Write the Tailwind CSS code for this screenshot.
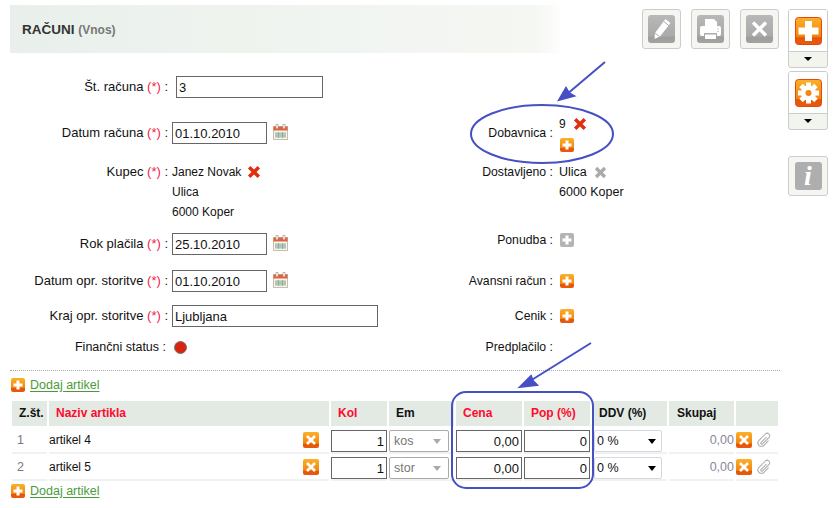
<!DOCTYPE html>
<html lang="sl">
<head>
  <meta charset="UTF-8" />
  <title>Računi</title>
  <script src="https://cdn.jsdelivr.net/npm/@tailwindcss/browser@4"></script>
</head>
<body class="bg-white font-['Liberation_Sans',Arial,sans-serif] text-[12px] text-[#111]">
  <!-- shared icons -->
  <svg class="absolute w-0 h-0">
    <defs>
      <linearGradient id="org" x1="0" y1="0" x2="0" y2="1">
        <stop offset="0" stop-color="#fbb028" /><stop offset="0.7" stop-color="#f3860f" /><stop offset="0.75" stop-color="#e3560a" /><stop offset="1" stop-color="#e9590c" />
      </linearGradient>
      <linearGradient id="gry" x1="0" y1="0" x2="0" y2="1">
        <stop offset="0" stop-color="#b8b8b8" /><stop offset="0.75" stop-color="#aaaaaa" /><stop offset="0.8" stop-color="#9e9e9e" /><stop offset="1" stop-color="#a2a2a2" />
      </linearGradient>
      <symbol id="add" viewBox="0 0 14 14">
        <rect width="14" height="14" rx="2" fill="url(#org)" />
        <path d="M5.500 2.500h3v3h3v3h-3v3h-3v-3h-3v-3h3z" fill="#fff" />
      </symbol>
      <symbol id="addg" viewBox="0 0 14 14">
        <rect width="14" height="14" rx="2" fill="#b4b4b4" />
        <path d="M5.500 2.500h3v3h3v3h-3v3h-3v-3h-3v-3h3z" fill="#fff" />
      </symbol>
      <symbol id="del" viewBox="0 0 16 16">
        <rect width="16" height="16" rx="2" fill="url(#org)" />
        <path d="M4 4l8 8M12 4l-8 8" stroke="#fff" stroke-width="2.600" />
      </symbol>
      <symbol id="cross" viewBox="0 0 14 14">
        <path d="M2.200 2.200l9.600 9.600M11.800 2.200l-9.600 9.600" stroke="currentColor" stroke-width="3.600" />
      </symbol>
      <symbol id="cal" viewBox="0 0 15 16">
        <rect x="0.500" y="2.500" width="14" height="13" fill="#f2f6f2" stroke="#cdbcae" />
        <rect x="0.500" y="2.500" width="14" height="4" fill="#e4623e" />
        <rect x="3" y="0.500" width="2" height="4" fill="#fff" stroke="#998" stroke-width="0.600" />
        <rect x="10" y="0.500" width="2" height="4" fill="#fff" stroke="#998" stroke-width="0.600" />
        <path d="M2 8h11v6H2z" fill="#c6dfbd" />
        <path d="M2 10h11M2 12h11M5.500 8v6M9.500 8v6" stroke="#8b9ba6" stroke-width="0.700" />
      </symbol>
      <symbol id="clip" viewBox="0 0 16 16">
        <path transform="rotate(45 8 8)" d="M7 5v7.500a1 1 0 0 0 2 0V3.500a2.500 2.500 0 0 0-5 0v9a3.500 3.500 0 0 0 7 0V6" fill="none" stroke="#aaa" />
      </symbol>
    </defs>
  </svg>

  <div class="relative w-[837px] h-[508px] overflow-hidden flex">
    <!-- main column -->
    <div class="w-[780px] shrink-0 pl-[10px] pt-[5px]">
      <div class="h-[48px] flex justify-between pt-1 bg-[linear-gradient(90deg,#e9f0eb_0%,#f5f7f3_68%,#fff_72%)]">
        <div class="pl-3 h-10 leading-[42px] font-bold text-[13.500px] text-[#333] whitespace-nowrap">RAČUNI <span class="text-[12px] text-[#777]">(Vnos)</span></div>
        <div class="flex gap-[10px] pr-px">
          <div class="w-[39px] h-10 border border-[#ccc] rounded-[3px] bg-[#f5f6f2] flex items-center justify-center">
            <svg class="w-[27px] h-[28px]" viewBox="0 0 27 28"><rect width="27" height="28" rx="3" fill="url(#gry)" /><path d="M17.500 4l5 4-10.500 13.500-5.500 2.500.5-6z" fill="#fff" /><path d="M7.200 18.200l4.300 3.300M15.800 6.500l5 4" stroke="#aaa" /></svg>
          </div>
          <div class="w-[39px] h-10 border border-[#ccc] rounded-[3px] bg-[#f5f6f2] flex items-center justify-center">
            <svg class="w-[27px] h-[28px]" viewBox="0 0 27 28"><rect width="27" height="28" rx="3" fill="url(#gry)" /><path d="M8 4h9l3 3v4H8z" fill="#fff" /><path d="M3 13a2 2 0 0 1 2-2h17a2 2 0 0 1 2 2v6a2 2 0 0 1-2 2h-2v-3H7v3H5a2 2 0 0 1-2-2z" fill="#fff" /><path d="M8 19.500h11v4.500H8z" fill="#fff" /><path d="M21 13.500v1M21 16v1" stroke="#999" /></svg>
          </div>
          <div class="w-[39px] h-10 border border-[#ccc] rounded-[3px] bg-[#f5f6f2] flex items-center justify-center">
            <svg class="w-[27px] h-[28px]" viewBox="0 0 27 28"><rect width="27" height="28" rx="3" fill="url(#gry)" /><path d="M7 7.500l13 13M20 7.500l-13 13" stroke="#fff" stroke-width="3.400" /></svg>
          </div>
        </div>
      </div>

      <!-- form -->
      <div class="flex h-[317px]">
        <div class="w-[390px] shrink-0 flex flex-col">
          <div class="mt-[23px] h-[22px] flex items-center">
            <div class="w-[158px] text-[13px] text-right whitespace-nowrap">Št. računa <span class="text-[#f0264a]">(*)</span> :</div>
            <input value="3" class="ml-2 w-[147px] h-[22px] border border-[#666] px-[2px] text-[13px]" />
          </div>
          <div class="mt-[24px] h-[22px] flex items-center">
            <div class="w-[158px] text-[13px] text-right whitespace-nowrap">Datum računa <span class="text-[#f0264a]">(*)</span> :</div>
            <input value="01.10.2010" class="ml-1 w-[95px] h-[22px] border border-[#666] px-[2px] text-[13px]" />
            <svg class="ml-[6px] w-[15px] h-4 -mt-[3px]"><use href="#cal" /></svg>
          </div>
          <div class="mt-[18px] flex">
            <div class="w-[158px] h-5 leading-5 text-[13px] text-right whitespace-nowrap">Kupec <span class="text-[#f0264a]">(*)</span> :</div>
            <div class="ml-1 leading-5">
              <div class="flex items-center h-5">Janez Novak<svg class="ml-[6px] w-[14px] h-[14px] text-[#e0300f]"><use href="#cross" /></svg></div>
              <div>Ulica</div>
              <div>6000 Koper</div>
            </div>
          </div>
          <div class="mt-[11px] h-[22px] flex items-center">
            <div class="w-[158px] text-[13px] text-right whitespace-nowrap">Rok plačila <span class="text-[#f0264a]">(*)</span> :</div>
            <input value="25.10.2010" class="ml-1 w-[95px] h-[22px] border border-[#666] px-[2px] text-[13px]" />
            <svg class="ml-[6px] w-[15px] h-4 -mt-[3px]"><use href="#cal" /></svg>
          </div>
          <div class="mt-[15px] h-[22px] flex items-center">
            <div class="w-[158px] text-[13px] text-right whitespace-nowrap">Datum opr. storitve <span class="text-[#f0264a]">(*)</span> :</div>
            <input value="01.10.2010" class="ml-1 w-[95px] h-[22px] border border-[#666] px-[2px] text-[13px]" />
            <svg class="ml-[6px] w-[15px] h-4 -mt-[3px]"><use href="#cal" /></svg>
          </div>
          <div class="mt-[13px] h-[22px] flex items-center">
            <div class="w-[158px] text-[13px] text-right whitespace-nowrap">Kraj opr. storitve <span class="text-[#f0264a]">(*)</span> :</div>
            <input value="Ljubljana" class="ml-1 w-[206px] h-[22px] border border-[#666] px-[2px] text-[13px]" />
          </div>
          <div class="mt-[10px] h-5 flex items-center">
            <div class="w-[156px] text-[12.500px] text-right whitespace-nowrap">Finančni status :</div>
            <div class="ml-2 w-[13px] h-[13px] rounded-full bg-[#d9230f] border border-[#777]"></div>
          </div>
        </div>

        <div class="flex flex-col text-[12.250px]">
          <div class="mt-[60px] h-10 flex items-center">
            <div class="w-[153px] text-right whitespace-nowrap">Dobavnica :</div>
            <div class="ml-[6px] text-[12px]">
              <div class="flex items-center h-5">9<svg class="ml-[7px] w-[14px] h-[14px] text-[#e0300f]"><use href="#cross" /></svg></div>
              <svg class="mt-[4px] ml-px w-[14px] h-[14px]"><use href="#add" /></svg>
            </div>
          </div>
          <div class="mt-[9px] flex">
            <div class="w-[153px] h-5 leading-5 text-right whitespace-nowrap">Dostavljeno :</div>
            <div class="ml-[6px] leading-5 text-[12.500px]">
              <div class="flex items-center h-5">Ulica<svg class="ml-[7px] w-[13px] h-[13px] text-[#aaa]"><use href="#cross" /></svg></div>
              <div>6000 Koper</div>
            </div>
          </div>
          <div class="mt-[28px] h-5 flex items-center">
            <div class="w-[153px] text-right whitespace-nowrap">Ponudba :</div>
            <svg class="ml-[7px] w-[14px] h-[14px]"><use href="#addg" /></svg>
          </div>
          <div class="mt-[21px] h-5 flex items-center">
            <div class="w-[153px] text-right whitespace-nowrap">Avansni račun :</div>
            <svg class="ml-[7px] w-[14px] h-[14px]"><use href="#add" /></svg>
          </div>
          <div class="mt-[15px] h-5 flex items-center">
            <div class="w-[153px] text-right whitespace-nowrap">Cenik :</div>
            <svg class="ml-[7px] w-[14px] h-[14px]"><use href="#add" /></svg>
          </div>
          <div class="mt-[11px] h-5 flex items-center">
            <div class="w-[153px] text-right whitespace-nowrap">Predplačilo :</div>
          </div>
        </div>
      </div>

      <div class="border-t border-dotted border-[#aaa]"></div>

      <a class="mt-[7px] h-[14px] flex items-center text-[12.500px] text-[#4a9a3c]">
        <svg class="ml-px w-[14px] h-[14px]"><use href="#add" /></svg>
        <span class="ml-[5px] underline underline-offset-2">Dodaj artikel</span>
      </a>

      <!-- items -->
      <div class="ml-[2px] mt-[9px] grid grid-cols-[35px_280px_56px_65px_66px_66px_75px_65px_42px] gap-x-[2px] w-[768px] text-[12.500px]">
        <div class="h-[25px] leading-[25px] bg-[#e3e9e3] font-bold text-[12px] pl-[7px]">Z.št.</div>
        <div class="h-[25px] leading-[25px] bg-[#e3e9e3] font-bold text-[12px] pl-[7px] text-[#ff0a2e]">Naziv artikla</div>
        <div class="h-[25px] leading-[25px] bg-[#e3e9e3] font-bold text-[12px] pl-[7px] text-[#ff0a2e]">Kol</div>
        <div class="h-[25px] leading-[25px] bg-[#e3e9e3] font-bold text-[12px] pl-[7px]">Em</div>
        <div class="h-[25px] leading-[25px] bg-[#e3e9e3] font-bold text-[12px] pl-[7px] text-[#ff0a2e]">Cena</div>
        <div class="h-[25px] leading-[25px] bg-[#e3e9e3] font-bold text-[12px] pl-[7px] text-[#ff0a2e]">Pop (%)</div>
        <div class="h-[25px] leading-[25px] bg-[#e3e9e3] font-bold text-[12px] pl-[7px]">DDV (%)</div>
        <div class="h-[25px] leading-[25px] bg-[#e3e9e3] font-bold text-[12px] pl-[8px]">Skupaj</div>
        <div class="h-[25px] bg-[#e3e9e3]"></div>

        <!-- row 1 -->
        <div class="h-[27px] mt-px border-b-2 border-[#f0f2f0] pl-[5px] leading-[27px] text-[#778]">1</div>
        <div class="h-[27px] mt-px border-b-2 border-[#f0f2f0] flex items-center justify-between text-[12px] pr-[10px]">artikel 4<svg class="w-4 h-4"><use href="#del" /></svg></div>
        <div class="h-[27px] mt-px border-b-2 border-[#f0f2f0]"><input value="1" class="mt-[3px] w-full h-[22px] border border-[#666] px-[2px] text-right text-[13px]" /></div>
        <div class="h-[27px] mt-px border-b-2 border-[#f0f2f0]"><div class="mt-[3px] relative w-[60px] h-[22px] border border-[#aaa] rounded-[2px] pl-[4px] leading-5 text-[#777]">kos<span class="absolute right-[7px] top-[8px] w-0 h-0 border-x-4 border-t-[5px] border-x-transparent border-t-[#aaa]"></span></div></div>
        <div class="h-[27px] mt-px border-b-2 border-[#f0f2f0]"><input value="0,00" class="mt-[3px] w-full h-[22px] border border-[#666] px-[2px] text-right text-[13px]" /></div>
        <div class="h-[27px] mt-px border-b-2 border-[#f0f2f0]"><input value="0" class="mt-[3px] w-full h-[22px] border border-[#666] px-[2px] text-right text-[13px]" /></div>
        <div class="h-[27px] mt-px border-b-2 border-[#f0f2f0]"><div class="mt-[3px] relative ml-[2px] w-[68px] h-[22px] border border-[#d5d8e0] rounded-[2px] pl-[2px] leading-5">0 %<span class="absolute right-[5px] top-[8px] w-0 h-0 border-x-4 border-t-[5px] border-x-transparent border-t-black"></span></div></div>
        <div class="h-[27px] mt-px border-b-2 border-[#f0f2f0] text-right leading-[27px] text-[#889]">0,00</div>
        <div class="h-[27px] mt-px border-b-2 border-[#f0f2f0] flex items-center"><svg class="w-4 h-4"><use href="#del" /></svg><svg class="ml-[5px] w-4 h-4"><use href="#clip" /></svg></div>

        <!-- row 2 -->
        <div class="h-[27px] border-b-2 border-[#f0f2f0] pl-[5px] leading-[27px] text-[#778]">2</div>
        <div class="h-[27px] border-b-2 border-[#f0f2f0] flex items-center justify-between text-[12px] pr-[10px]">artikel 5<svg class="w-4 h-4"><use href="#del" /></svg></div>
        <div class="h-[27px] border-b-2 border-[#f0f2f0]"><input value="1" class="mt-[3px] w-full h-[22px] border border-[#666] px-[2px] text-right text-[13px]" /></div>
        <div class="h-[27px] border-b-2 border-[#f0f2f0]"><div class="mt-[3px] relative w-[60px] h-[22px] border border-[#aaa] rounded-[2px] pl-[4px] leading-5 text-[#777]">stor<span class="absolute right-[7px] top-[8px] w-0 h-0 border-x-4 border-t-[5px] border-x-transparent border-t-[#aaa]"></span></div></div>
        <div class="h-[27px] border-b-2 border-[#f0f2f0]"><input value="0,00" class="mt-[3px] w-full h-[22px] border border-[#666] px-[2px] text-right text-[13px]" /></div>
        <div class="h-[27px] border-b-2 border-[#f0f2f0]"><input value="0" class="mt-[3px] w-full h-[22px] border border-[#666] px-[2px] text-right text-[13px]" /></div>
        <div class="h-[27px] border-b-2 border-[#f0f2f0]"><div class="mt-[3px] relative ml-[2px] w-[68px] h-[22px] border border-[#d5d8e0] rounded-[2px] pl-[2px] leading-5">0 %<span class="absolute right-[5px] top-[8px] w-0 h-0 border-x-4 border-t-[5px] border-x-transparent border-t-black"></span></div></div>
        <div class="h-[27px] border-b-2 border-[#f0f2f0] text-right leading-[27px] text-[#889]">0,00</div>
        <div class="h-[27px] border-b-2 border-[#f0f2f0] flex items-center"><svg class="w-4 h-4"><use href="#del" /></svg><svg class="ml-[5px] w-4 h-4"><use href="#clip" /></svg></div>
      </div>

      <a class="mt-[3px] h-[14px] flex items-center text-[12.500px] text-[#4a9a3c]">
        <svg class="ml-px w-[14px] h-[14px]"><use href="#add" /></svg>
        <span class="ml-[5px] underline underline-offset-2">Dodaj artikel</span>
      </a>
    </div>

    <!-- side buttons -->
    <div class="ml-2 pt-[9px] flex flex-col w-[40px]">
      <div class="h-[59px] border border-[#ccc] rounded-[3px] bg-[#f2f4ee] overflow-hidden">
        <div class="h-[35px] bg-white flex items-end justify-center border-b border-[#ccc] pb-[6px] box-content">
          <svg class="w-[27px] h-[28px]" viewBox="0 0 27 28"><rect x="0.500" y="0.500" width="26" height="27" rx="3" fill="url(#org)" stroke="#e04a10" /><path d="M10 4h7v6.500h6.500v7H17V24h-7v-6.500H3.500v-7H10z" fill="#fff" /></svg>
        </div>
        <div class="flex justify-center pt-[5px]"><span class="w-0 h-0 border-x-[4px] border-t-[4px] border-x-transparent border-t-black"></span></div>
      </div>
      <div class="mt-[3px] h-[59px] border border-[#ccc] rounded-[3px] bg-[#f2f4ee] overflow-hidden">
        <div class="h-[35px] bg-white flex items-end justify-center border-b border-[#ccc] pb-[6px] box-content">
          <svg class="w-[27px] h-[28px]" viewBox="0 0 27 28"><rect x="0.500" y="0.500" width="26" height="27" rx="3" fill="url(#org)" stroke="#e04a10" /><g fill="#fff"><circle cx="13.500" cy="14" r="7.500" /><rect x="11" y="3.500" width="5" height="21" /><rect x="3" y="11.500" width="21" height="5" /><rect x="11" y="3.500" width="5" height="21" transform="rotate(45 13.500 14)" /><rect x="11" y="3.500" width="5" height="21" transform="rotate(-45 13.500 14)" /></g><circle cx="13.500" cy="14" r="3" fill="#f3860f" /></svg>
        </div>
        <div class="flex justify-center pt-[5px]"><span class="w-0 h-0 border-x-[4px] border-t-[4px] border-x-transparent border-t-black"></span></div>
      </div>
      <div class="mt-[26px] w-[40px] h-10 border border-[#ccc] rounded-[3px] bg-[#f5f6f2] flex items-center justify-center">
        <div class="w-[27px] h-[28px] rounded-[3px] bg-[#aeaeae] text-white text-center font-bold italic text-[28px] leading-[28px] font-['Liberation_Serif',serif]">i</div>
      </div>
    </div>

    <!-- blue annotations drawn over the screenshot -->
    <svg class="absolute left-0 top-0 w-[837px] h-[508px] pointer-events-none" viewBox="0 0 837 508" fill="none" stroke="#4450c4" stroke-width="2">
      <ellipse cx="542" cy="134" rx="71" ry="29" />
      <path d="M605 62L566 95" />
      <path d="M559 100L566 88L569 93L574 96z" fill="#4450c4" />
      <path d="M591 343L530 381" />
      <path d="M520 387L531 376L533 381L537 385z" fill="#4450c4" />
      <rect x="452" y="392" width="141" height="96" rx="14" />
    </svg>
  </div>
</body>
</html>
